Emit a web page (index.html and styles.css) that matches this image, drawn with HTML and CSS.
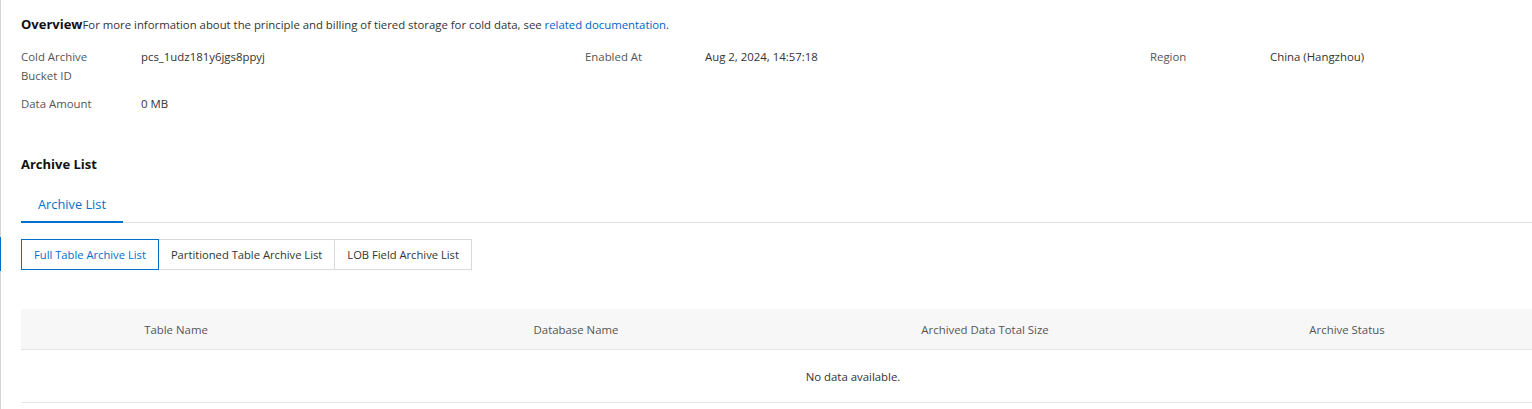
FILE: index.html
```html
<!DOCTYPE html>
<html lang="en">
<head>
<meta charset="utf-8">
<title>Cold Archive</title>
<link rel="stylesheet" href="styles.css">
</head>
<body>
<div class="edge"><div class="edge-mark"></div></div>
<main class="page">
  <section class="overview">
    <div class="overview-title"><strong>Overview</strong><span class="overview-desc">For more information about the principle and billing of tiered storage for cold data, see <a class="link" href="#">related documentation</a>.</span></div>
    <div class="desc-grid">
      <div class="desc-item"><div class="desc-label">Cold Archive Bucket ID</div><div class="desc-value">pcs_1udz181y6jgs8ppyj</div></div>
      <div class="desc-item"><div class="desc-label">Enabled At</div><div class="desc-value">Aug 2, 2024, 14:57:18</div></div>
      <div class="desc-item"><div class="desc-label">Region</div><div class="desc-value">China (Hangzhou)</div></div>
      <div class="desc-item"><div class="desc-label">Data Amount</div><div class="desc-value">0 MB</div></div>
    </div>
  </section>

  <h2 class="section-title">Archive List</h2>

  <div class="tabs">
    <div class="tab active">Archive List</div>
  </div>

  <div class="btn-group">
    <button class="seg-btn active">Full Table Archive List</button>
    <button class="seg-btn">Partitioned Table Archive List</button>
    <button class="seg-btn">LOB Field Archive List</button>
  </div>

  <table class="table">
    <colgroup>
      <col class="c1"><col class="c2"><col class="c3"><col class="c4"><col class="c5">
    </colgroup>
    <thead>
      <tr><th>Table Name</th><th>Database Name</th><th>Archived Data Total Size</th><th>Archive Status</th><th></th></tr>
    </thead>
    <tbody>
      <tr><td class="empty" colspan="5">No data available.</td></tr>
    </tbody>
  </table>
</main>
</body>
</html>
```
FILE: styles.css
```css
html, body {
  margin: 0;
  padding: 0;
  background: #fff;
  overflow: hidden;
}
body {
  font-family: "Open Sans", "Noto Sans", sans-serif;
  font-size: 12px;
  color: #333;
  display: flex;
  width: 1532px;
  height: 409px;
}
.edge {
  flex: 0 0 1px;
  background: #d4d4d4;
  position: relative;
}
.edge-mark {
  position: absolute;
  left: 0;
  top: 237px;
  width: 1px;
  height: 34px;
  background: #0070cc;
}
.page {
  flex: 0 0 auto;
  width: 1664px;
  padding: 14px 0 0 20px;
}
.overview-title {
  line-height: 20px;
  color: #333;
  white-space: nowrap;
}
.overview-title strong {
  font-size: 13px;
  font-weight: 700;
  color: #111;
}
.overview-desc {
  font-size: 11.35px;
}
.link {
  color: #0064c8;
  text-decoration: none;
}
.desc-grid {
  display: grid;
  grid-template-columns: 564px 565px 1fr;
  row-gap: 9px;
  margin-top: 12px;
}
.desc-item {
  display: flex;
  line-height: 19px;
}
.desc-label {
  width: 88px;
  margin-right: 32px;
  color: #555;
  font-size: 11.4px;
}
.desc-value {
  color: #333;
  font-size: 11.4px;
}
.section-title {
  margin: 41px 0 0;
  font-size: 13px;
  font-weight: 700;
  line-height: 20px;
  color: #111;
}
.tabs {
  margin-top: 21px;
  border-bottom: 1px solid #e3e3e3;
  display: flex;
}
.tab {
  padding: 0 17px;
  height: 28px;
  line-height: 18px;
  font-size: 12.8px;
  color: #0070cc;
  box-sizing: border-box;
  border-bottom: 2px solid #0070cc;
  margin-bottom: -1px;
  white-space: nowrap;
}
.btn-group {
  display: flex;
  margin-top: 16px;
}
.seg-btn {
  font-family: inherit;
  font-size: 11.2px;
  color: #333;
  background: #fff;
  border: 1px solid #d9d9d9;
  height: 31px;
  padding: 0 12px;
  margin-left: -1px;
  white-space: nowrap;
  cursor: pointer;
}
.seg-btn:first-child {
  margin-left: 0;
}
.seg-btn.active {
  border-color: #0070cc;
  color: #0070cc;
  position: relative;
  z-index: 1;
}
.table {
  margin-top: 39px;
  border-collapse: collapse;
  table-layout: fixed;
  width: 1664px;
}
.c1 { width: 310px; }
.c2 { width: 490px; }
.c3 { width: 328px; }
.c4 { width: 396px; }
.c5 { width: 140px; }
.table th {
  background: #f7f7f7;
  font-weight: 400;
  font-size: 11.4px;
  color: #555;
  height: 40px;
  padding: 0;
  text-align: center;
  border-bottom: 1px solid #e5e5e5;
}
.table td.empty {
  height: 52px;
  text-align: center;
  font-size: 11.4px;
  color: #333;
  border-bottom: 1px solid #e5e5e5;
  padding: 0;
}
```
